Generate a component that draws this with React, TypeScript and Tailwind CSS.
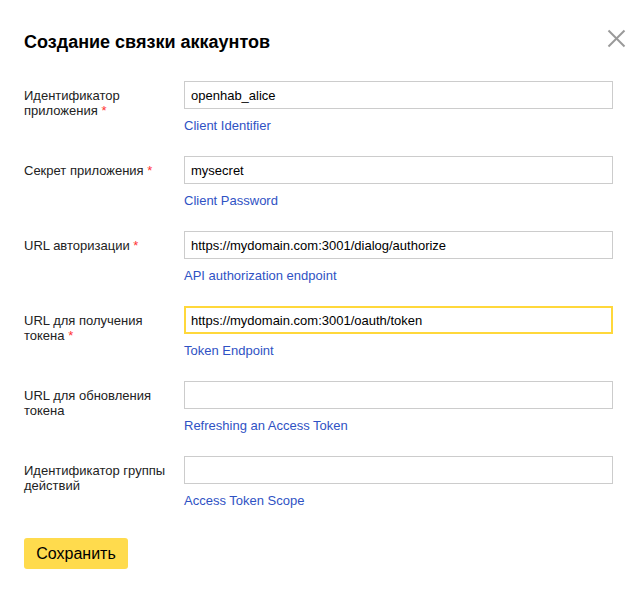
import React from 'react';

const fields = [
  { label: 'Идентификатор приложения', required: true, value: 'openhab_alice', hint: 'Client Identifier' },
  { label: 'Секрет приложения', required: true, value: 'mysecret', hint: 'Client Password' },
  { label: 'URL авторизации', required: true, value: 'https://mydomain.com:3001/dialog/authorize', hint: 'API authorization endpoint' },
  { label: 'URL для получения токена', required: true, value: 'https://mydomain.com:3001/oauth/token', hint: 'Token Endpoint', focused: true },
  { label: 'URL для обновления токена', required: false, value: '', hint: 'Refreshing an Access Token' },
  { label: 'Идентификатор группы действий', required: false, value: '', hint: 'Access Token Scope' },
];

const App = () => {
  return (
    <div className="w-[634px] h-[592px] bg-white pl-6 pr-[21px] pt-[31px] font-['Liberation_Sans',Arial,sans-serif] text-[13px] text-[#222] relative">
      {/* Header */}
      <h1 className="text-[18px] font-bold leading-[22px] text-black">Создание связки аккаунтов</h1>
      <button className="absolute top-[29px] right-[8px] w-[19px] h-[19px] text-[#999]">
        <svg viewBox="0 0 19 19" width="19" height="19" stroke="currentColor" strokeWidth="2">
          <line x1="1.5" y1="1.5" x2="17.5" y2="17.5" />
          <line x1="17.5" y1="1.5" x2="1.5" y2="17.5" />
        </svg>
      </button>

      {/* Fields */}
      <div className="mt-[28px] flex flex-col gap-[23px]">
        {fields.map((f) => (
          <div key={f.hint} className="flex">
            <div className="w-[160px] shrink-0 pr-[10px] pt-[7px] leading-[15px]">
              {f.label}
              {f.required && <span className="text-[#f33]"> *</span>}
            </div>
            <div className="flex-1 flex flex-col">
              <div
                className={
                  f.focused
                    ? 'h-[28px] border-2 border-[#ffd83b] px-[5px] flex items-center'
                    : 'h-[28px] border border-[#ccc] px-[6px] flex items-center'
                }
              >
                <span className="text-[13px] text-black leading-[15px]">{f.value}</span>
              </div>
              <a className="mt-[9px] leading-[15px] text-[#2f52c4] cursor-pointer">{f.hint}</a>
            </div>
          </div>
        ))}
      </div>

      {/* Save */}
      <button className="mt-[30px] w-[104px] h-[31px] rounded-[3px] bg-[#ffdb4d] text-[16px] text-black">
        Сохранить
      </button>
    </div>
  );
};

export default App;
